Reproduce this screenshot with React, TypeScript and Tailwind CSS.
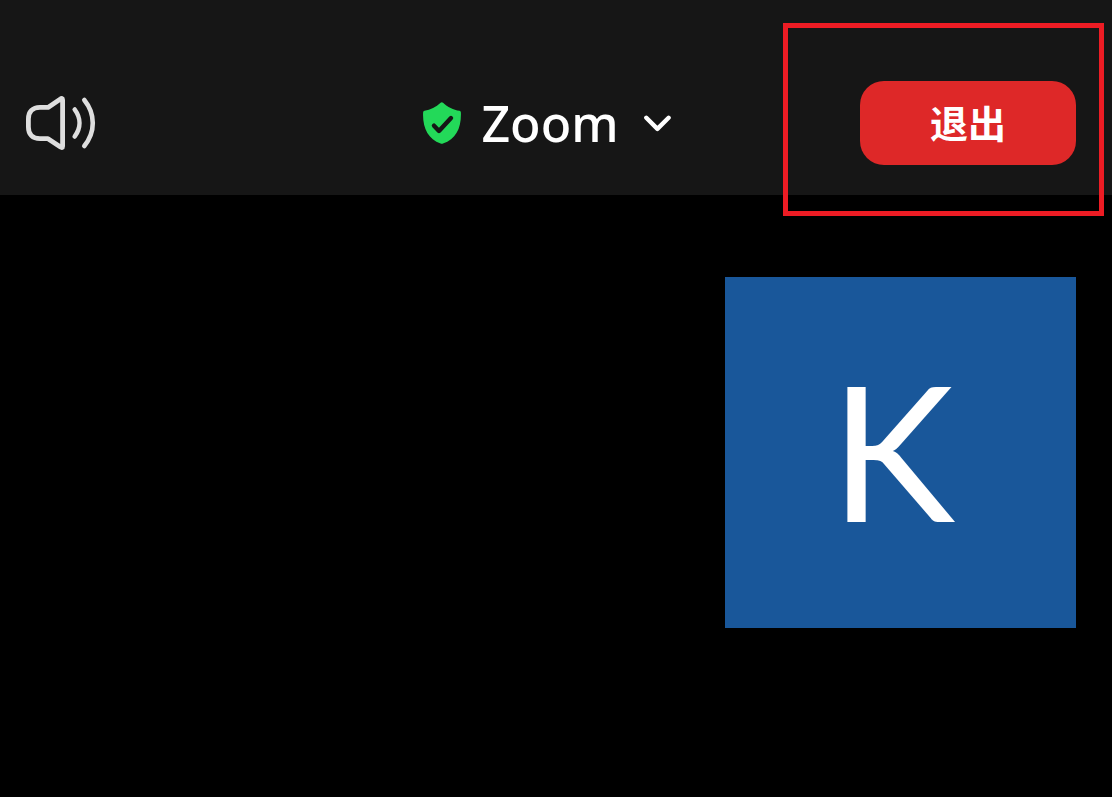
function SpeakerIcon() {
  return (
    <svg
      viewBox="0 0 70 54"
      className="w-[70px] h-[54px]"
      fill="none"
      stroke="currentColor"
      strokeWidth={4.8}
      strokeLinecap="round"
      strokeLinejoin="round"
      aria-hidden="true"
    >
      <path d="M22 11.4H14C6.5 11.4 2.4 15.8 2.4 23V31C2.4 38.4 6.5 42.7 14 42.7H22L34.5 51.1C35.6 51.8 36.6 51.7 36.6 50.2V3.9C36.6 2.4 35.6 2.2 34.5 3Z" />
      <path d="M48.7 13.5C55 22 55 32 48.7 40.5" strokeWidth={4.6} />
      <path d="M58.3 4C69.6 18 69.6 36 58.3 50" strokeWidth={4.6} />
    </svg>
  );
}

function ShieldIcon() {
  return (
    <svg viewBox="0 0 38 42" className="w-[38px] h-[42px]" fill="none" aria-hidden="true">
      <path
        d="M17.6 .7Q18.8 -.1 20 .7C24.5 4.8 30.5 8 36.5 8.8Q37.8 9 37.9 10.5C38.4 26 33 37 20 41.6Q18.8 42 17.6 41.6C5 37 -.6 26 .1 10.5Q.2 9 1.5 8.8C7.5 8 13 4.8 17.6 .7Z"
        fill="#23d959"
      />
      <path
        d="M11 23.7L16 29L28 16"
        stroke="#161616"
        strokeWidth={4.4}
        strokeLinecap="round"
        strokeLinejoin="round"
      />
    </svg>
  );
}

function ChevronIcon() {
  return (
    <svg viewBox="0 0 27 17" className="w-[27px] h-[17px]" fill="none" aria-hidden="true">
      <path
        d="M2.3 2.8L13.4 13.9L24.6 2.8"
        stroke="currentColor"
        strokeWidth={4.4}
        strokeLinecap="round"
        strokeLinejoin="round"
      />
    </svg>
  );
}

export default function App() {
  return (
    <div className="min-h-screen bg-black text-white font-['Noto_Sans','Noto_Sans_CJK_SC',sans-serif]">
      <header className="relative grid grid-cols-[1fr_auto_1fr] items-center bg-[#161616] pt-[81px] pb-[30px] pl-[26px] pr-9">
        <button type="button" aria-label="Speaker" className="justify-self-start text-[#dedede]">
          <SpeakerIcon />
        </button>

        <button type="button" className="flex items-center pr-2">
          <ShieldIcon />
          <span className="ml-5 mr-[25px] text-[50px] leading-none font-medium">Zoom</span>
          <ChevronIcon />
        </button>

        <button
          type="button"
          className="justify-self-end w-[216px] h-[84px] rounded-3xl bg-[#de2828] text-[38px] leading-none font-bold"
        >
          退出
        </button>

        {/* highlight around the leave button */}
        <div className="pointer-events-none absolute top-[23px] right-2 w-[321px] h-[193px] border-5 border-[#ed1c24]" />
      </header>

      <main className="flex justify-end pt-[82px] pr-9">
        <div className="flex size-[351px] items-center justify-center bg-[#19579a] pr-4 pb-2">
          <span className="font-['Lato',sans-serif] text-[188px] leading-none">K</span>
        </div>
      </main>
    </div>
  );
}
